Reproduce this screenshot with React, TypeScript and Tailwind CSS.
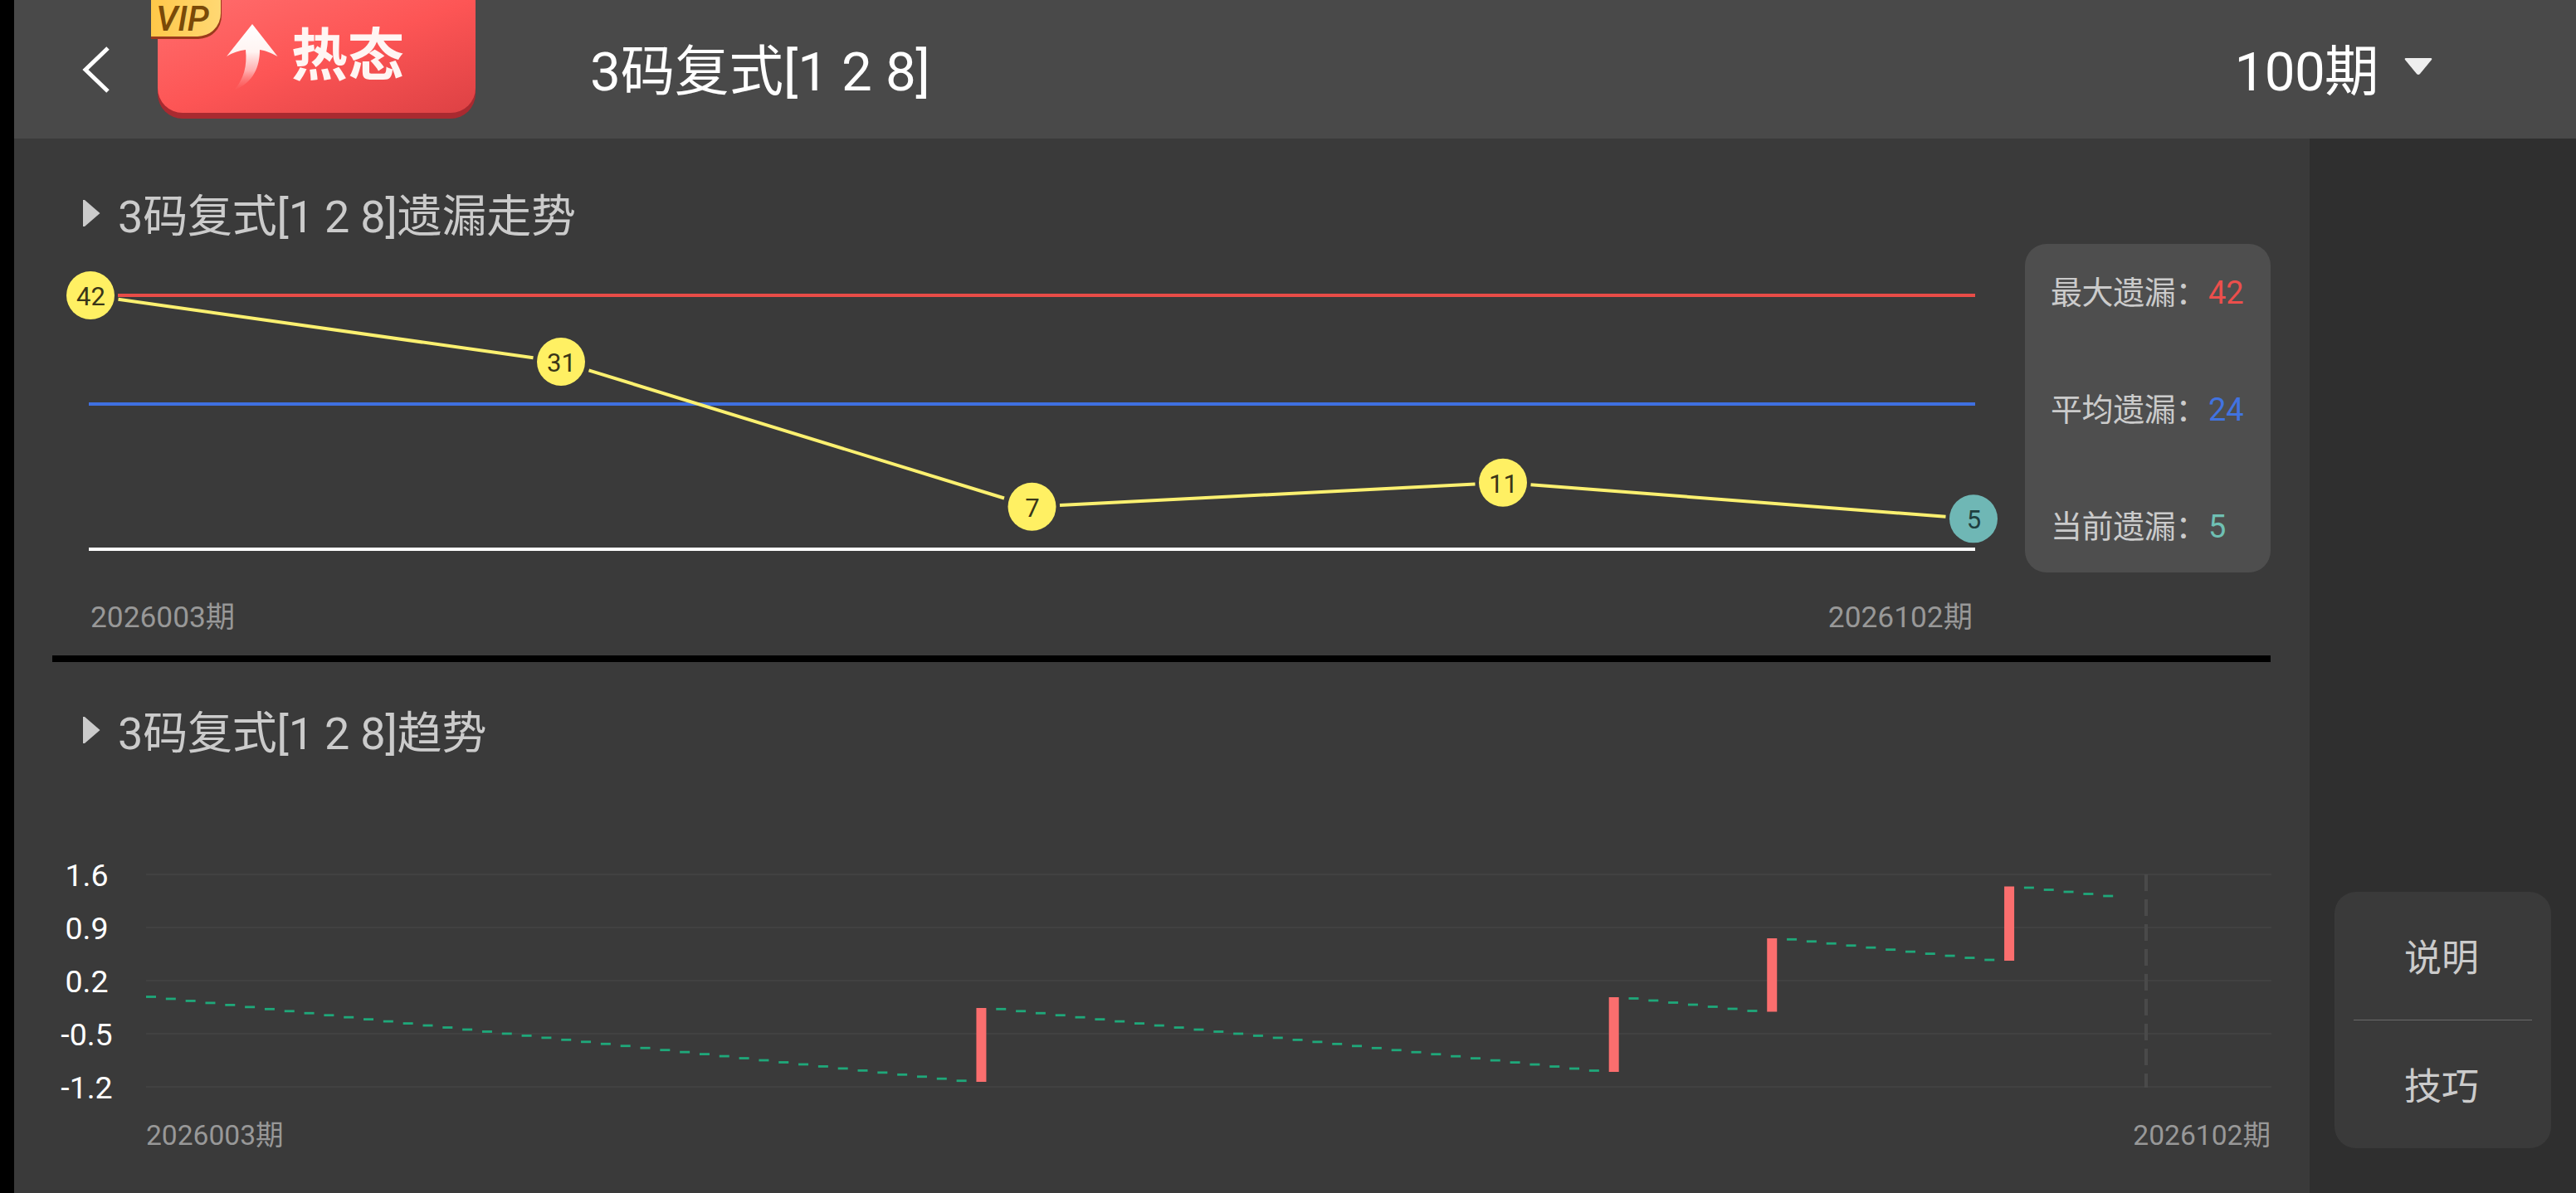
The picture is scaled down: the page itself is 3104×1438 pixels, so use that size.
import React from "react";

const points = [
  { x: 109, value: 42 },
  { x: 676, value: 31 },
  { x: 1243.5, value: 7 },
  { x: 1811, value: 11 },
  { x: 2378, value: 5 },
].map((p) => ({ ...p, x: p.x - 63, y: 356 - 294 + (42 - p.value) * 7.28 }));

// Segments stop short of each marker.
const GAP = 33.5;

function MissChart() {
  return (
    <svg className="block h-[396px] w-[2377px] shrink-0 overflow-visible" viewBox="0 0 2377 396">
      <rect x="79" y="60" width="2238" height="4" fill="#e84c47" />
      <rect x="44" y="191" width="2273" height="4" fill="#3f70e0" />
      <rect x="44" y="366" width="2273" height="4" fill="#ffffff" />
      {points.slice(1).map((b, i) => {
        const a = points[i];
        const m = (b.y - a.y) / (b.x - a.x);
        return (
          <line key={i} x1={a.x + GAP} y1={a.y + m * GAP} x2={b.x - GAP} y2={b.y - m * GAP} stroke="#fbf070" strokeWidth="4" />
        );
      })}
      {points.map((p, i) => {
        const last = i === points.length - 1;
        return (
          <g key={i}>
            <circle cx={p.x} cy={p.y} r="29" fill={last ? "#6fb7b5" : "#fff063"} />
            <text x={p.x + 0.5} y={p.y + 12} textAnchor="middle" fontSize="31" fill={last ? "#1f3f40" : "#3a3618"}>
              {p.value}
            </text>
          </g>
        );
      })}
    </svg>
  );
}

const STEP = 23.82;
const bars = [
  { i: 42, top: 1215, bottom: 1304 },
  { i: 74, top: 1202, bottom: 1292 },
  { i: 82, top: 1131, bottom: 1219.5 },
  { i: 94, top: 1068.5, bottom: 1158 },
];
const runs = [
  { from: 0, to: 41, y0: 1201.5, y1: 1302.7 },
  { from: 43, to: 73, y0: 1216.3, y1: 1290.5 },
  { from: 75, to: 81, y0: 1203.5, y1: 1218.5 },
  { from: 83, to: 93, y0: 1132.3, y1: 1157 },
  { from: 95, to: 99, y0: 1070, y1: 1080 },
];
const dashes = runs.flatMap((r) =>
  Array.from({ length: r.to - r.from + 1 }, (_, k) => ({
    x: 113 + (r.from + k) * STEP,
    y: r.y0 + ((r.y1 - r.y0) * k) / (r.to - r.from) - 1030,
  })),
);
const ticks = ["1.6", "0.9", "0.2", "-0.5", "-1.2"];

function TrendChart() {
  return (
    <svg className="block h-[300px] w-[2673px] overflow-visible" viewBox="0 0 2673 300">
      {ticks.map((t, i) => (
        <g key={t}>
          <rect x="113" y={23 + i * 64} width="2561" height="2" fill="#414141" />
          <text x="41.5" y={37.5 + i * 64} textAnchor="middle" fontSize="37.5" fill="#ffffff">
            {t}
          </text>
        </g>
      ))}
      <line x1="2523" y1="24" x2="2523" y2="281" stroke="#4a4a4a" strokeWidth="4" strokeDasharray="20 10" />
      {dashes.map((d, i) => (
        <rect key={i} x={d.x} y={d.y - 1.4} width="12" height="2.8" fill="#1fa87a" />
      ))}
      {bars.map((b) => (
        <rect key={b.i} x={113 + b.i * STEP} y={b.top - 1030} width="12" height={b.bottom - b.top} fill="#fb6e6e" />
      ))}
    </svg>
  );
}

function HotBadge() {
  return (
    <div className="relative ml-[57px] h-[143px] w-[383px] shrink-0 self-start rounded-b-[30px] bg-[#a92a30]">
      <div className="flex h-[136px] items-start rounded-b-[30px] bg-linear-to-br from-[#ff6d6d] via-[#fd5555] to-[#dd4144] pl-[80px]">
        <svg className="mt-[27px] h-[84px] w-[68px]" viewBox="0 0 68 84">
          <defs>
            <linearGradient id="arrow" x1="0" y1="0" x2="0" y2="1">
              <stop offset="0" stopColor="#ffffff" />
              <stop offset="0.42" stopColor="#fff4f2" />
              <stop offset="0.7" stopColor="#ffc0c0" stopOpacity="0.85" />
              <stop offset="1" stopColor="#ff8080" stopOpacity="0" />
            </linearGradient>
          </defs>
          <path
            d="M34 2 L64.5 41 C56 36.500 50 34 43 33 C43 53 36 72 12 82 C24 68 28 52 26 33 C18 34 10 36.500 3 41 Z"
            fill="url(#arrow)"
          />
        </svg>
        <span className="mt-[23px] ml-[13px] text-[68px] leading-[90px] font-bold whitespace-nowrap text-[#fff5f3]">热态</span>
      </div>
      <div className="absolute top-0 -left-[8px] h-[47px] w-[85px] rounded-br-[28px] bg-[#9c3a1c]">
        <div className="h-[44px] w-[84px] rounded-br-[28px] bg-linear-to-r from-[#ffc848] to-[#ffd873] pl-[6px] text-[42px] leading-[45px] font-medium text-[#7a4a08] italic">
          VIP
        </div>
      </div>
    </div>
  );
}

function SectionTitle({ children }: { children: React.ReactNode }) {
  return (
    <h2 className="flex h-[64px] items-center pl-[83px] text-[54px] leading-[64px] tracking-[-0.2px] whitespace-pre text-[#cbcbcb]">
      <svg className="-mt-[7px] mr-[21px] h-[34px] w-[21px]" viewBox="0 0 21 34">
        <path d="M0 1 L2 1 L20.500 17 L2 33 L0 33 Z" fill="#cbcbcb" />
      </svg>
      <span className="mt-[4px]">{children}</span>
    </h2>
  );
}

function Stat({ label, value, color }: { label: string; value: number; color: string }) {
  return (
    <div className="flex h-[50px] items-center text-[38px] leading-[50px] whitespace-nowrap text-[#cbcbcb]">
      <span className="w-[190px] tracking-[-0.4px]">{label}：</span>
      <span className={color}>{value}</span>
    </div>
  );
}

export default function App() {
  return (
    <div className="flex h-[1438px] w-[3104px] overflow-hidden bg-black pl-[17px] font-['Roboto','Noto_Sans_CJK_SC',sans-serif]">
      <div className="flex min-w-0 flex-1 flex-col">
        <header className="flex h-[167px] shrink-0 items-center bg-[#494949] text-[65.5px] leading-[80px] text-white">
          <svg className="ml-[82px] h-[58px] w-[34px] shrink-0" viewBox="0 0 34 58" fill="none">
            <path d="M31 3 L4 29 L31 55" stroke="#ffffff" strokeWidth="5" />
          </svg>
          <HotBadge />
          <h1 className="mt-[6px] ml-[138px] tracking-[-0.1px] whitespace-pre">3码复式[1 2 8]</h1>
          <button className="mr-[173px] ml-auto flex items-center">
            <span className="mt-[6px] tracking-[-0.6px]">100期</span>
            <svg className="-mt-[7px] ml-[31px] h-[20px] w-[34px]" viewBox="0 0 34 20">
              <path d="M2 0 H32 Q34 0 33 2 L19 19 Q17 21 15 19 L1 2 Q0 0 2 0 Z" fill="#eeeeee" />
            </svg>
          </button>
        </header>

        <div className="flex flex-1">
          <main className="w-[2766px] shrink-0 bg-[#3a3a3a]">
            <section className="pt-[61px]">
              <SectionTitle>3码复式[1 2 8]遗漏走势</SectionTitle>
              <div className="mt-[2px] ml-[46px] flex">
                <MissChart />
                <aside className="flex h-[396px] w-[296px] flex-col justify-between rounded-[26px] bg-[#4e4e4e] pt-[34px] pr-4 pb-[30px] pl-[31px]">
                  <Stat label="最大遗漏" value={42} color="text-[#ec4f4c]" />
                  <Stat label="平均遗漏" value={24} color="text-[#4173e0]" />
                  <Stat label="当前遗漏" value={5} color="text-[#6fc0b4]" />
                </aside>
              </div>
              <div className="mt-[29px] ml-[92px] flex h-[50px] w-[2268px] items-center justify-between text-[35.3px] leading-[50px] text-[#989898]">
                <span>2026003期</span>
                <span>2026102期</span>
              </div>
            </section>
            <div className="mt-[21px] ml-[46px] h-[8px] w-[2673px] bg-black" />
            <section className="pt-[53px]">
              <SectionTitle>3码复式[1 2 8]趋势</SectionTitle>
              <div className="mt-[115px] ml-[46px]">
                <TrendChart />
              </div>
              <div className="mt-[14px] ml-[159px] flex h-[50px] w-[2560px] items-center justify-between text-[33.6px] leading-[50px] text-[#989898]">
                <span>2026003期</span>
                <span>2026102期</span>
              </div>
            </section>
          </main>

          <aside className="flex flex-1 flex-col items-start justify-end bg-[#2f2f2f] pb-[54px] pl-[30px]">
            <div className="flex h-[309px] w-[261px] flex-col rounded-[26px] bg-[#3a3a3a] px-[23px] text-[45px] text-[#cbcbcb]">
              <button className="flex-1 pt-[8px] pr-[3px]">说明</button>
              <div className="h-px bg-[#6b6b6b]" />
              <button className="flex-1 pt-[8px] pr-[3px]">技巧</button>
            </div>
          </aside>
        </div>
      </div>
    </div>
  );
}
